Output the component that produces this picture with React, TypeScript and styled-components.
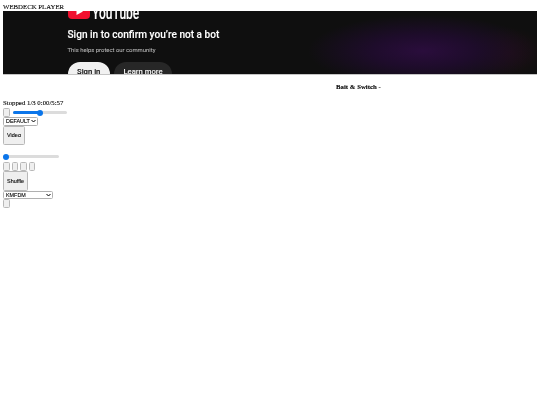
import React from "react";
import styled, { createGlobalStyle } from "styled-components";

const Global = createGlobalStyle`
  html, body { margin: 0; padding: 0; background: #fff; }
  body { font-family: "Liberation Serif", serif; font-size: 6.8px; color: #000; -webkit-text-stroke: 0.1px currentColor; }
`;

const Page = styled.div`
  padding: 3px 3px 0;
  display: flex;
  flex-direction: column;
  align-items: flex-start;
  filter: blur(0.3px);
`;
const Heading = styled.div`
  font-size: 6.8px;
  line-height: 8px;
  height: 8px;
  white-space: nowrap;
`;
const Frame = styled.div`
  width: 534px;
  height: 63.5px;
  box-sizing: border-box;
  overflow: hidden;
  background:
    radial-gradient(ellipse 115px 36px at 420px 40px, #2a0d3c 0%, #1e0c2b 45%, rgba(15,15,15,0) 100%),
    radial-gradient(ellipse 38px 26px at 505px 42px, #1e0f12 0%, rgba(15,15,15,0) 100%),
    #0f0f0f;
  border-bottom: 1px solid #c4c4c4;
  padding-left: 64.5px;
  display: flex;
  flex-direction: column;
  align-items: flex-start;
  font-family: Roboto, "Liberation Sans", sans-serif;
`;
const Logo = styled.div`
  display: flex;
  gap: 2px;
  height: 8.5px;
  flex: none;
  overflow: hidden;
`;
const LogoMark = styled.svg`
  width: 22px;
  height: 15px;
  margin-top: -7px;
  flex: none;
`;
const LogoWord = styled.span`
  color: #fff;
  font-size: 18px;
  line-height: 18px;
  font-weight: 500;
  margin-top: -7px;
  display: inline-block;
  flex: none;
  transform: scaleX(0.67);
  transform-origin: left;
`;
const Title = styled.div`
  margin-top: 7.5px;
  color: #fff;
  font-size: 10.1px;
  line-height: 15px;
  font-weight: 500;
  white-space: nowrap;
`;
const Sub = styled.div`
  margin-top: 4px;
  color: #aaa;
  font-size: 5.9px;
  line-height: 8px;
  white-space: nowrap;
`;
const Actions = styled.div`
  margin-top: 7.5px;
  display: flex;
  gap: 4px;
`;
const Pill = styled.div<{ $light?: boolean }>`
  height: 24px;
  padding: 0 9.5px;
  border-radius: 12px;
  background: ${(p) => (p.$light ? "#f1f1f1" : "#272727")};
  color: ${(p) => (p.$light ? "#0f0f0f" : "#f1f1f1")};
  font-size: 7.7px;
  font-weight: 500;
  line-height: 20px;
  white-space: nowrap;
`;
const TrackTitle = styled.div`
  align-self: stretch;
  margin-top: 8px;
  padding-left: 333px;
  font-weight: bold;
  font-size: 6.8px;
  line-height: 8px;
  height: 8px;
  white-space: nowrap;
`;
const Status = styled.div`
  margin-top: 8px;
  font-size: 6.8px;
  line-height: 8px;
  height: 8px;
  white-space: nowrap;
`;
const Row = styled.div`
  margin-top: 1.5px;
  display: flex;
  align-items: center;
  gap: 3.5px;
`;
const Square = styled.button`
  width: 6.5px;
  height: 9px;
  padding: 0;
  box-sizing: border-box;
  background: #efefef;
  border: 1px solid #b8b8b8;
  border-radius: 1.5px;
  display: block;
`;
const Slider = styled.div<{ $w: number }>`
  position: relative;
  width: ${(p) => p.$w}px;
  height: 3px;
  border-radius: 2px;
  background: #dcdcdc;
`;
const Fill = styled.div`
  height: 100%;
  border-radius: 2px;
  background: #0a75ea;
`;
const Thumb = styled.div`
  position: absolute;
  top: -1.5px;
  width: 6px;
  height: 6px;
  margin-left: -3px;
  border-radius: 50%;
  background: #0a75ea;
`;
const Select = styled.div<{ $w: number }>`
  width: ${(p) => p.$w}px;
  height: 8.5px;
  box-sizing: border-box;
  border: 1px solid #b0b0b0;
  border-radius: 1.5px;
  background: #fff;
  display: flex;
  align-items: center;
  justify-content: space-between;
  padding: 0 1px 0 2px;
  font-family: "Liberation Sans", sans-serif;
  font-size: 5.4px;
  line-height: 6px;
`;
const Chevron = styled.svg`
  width: 5px;
  height: 4px;
  flex: none;
`;
const TextButton = styled.button<{ $w: number }>`
  width: ${(p) => p.$w}px;
  height: 19.5px;
  padding: 0;
  box-sizing: border-box;
  background: #efefef;
  border: 1px solid #b8b8b8;
  border-radius: 1.5px;
  font-family: "Liberation Sans", sans-serif;
  font-size: 5.5px;
  color: #000;
  display: block;
`;
const VolumeRow = styled.div`
  margin-top: 8.5px;
  height: 6px;
  display: flex;
  align-items: center;
`;
const Buttons = styled.div`
  margin-top: 2px;
  display: flex;
  gap: 2px;
`;
const TallSquare = styled(Square)`
  height: 9.5px;
`;

const Arrow = () => (
  <Chevron viewBox="0 0 10 8">
    <path d="M1 2l4 4 4-4" fill="none" stroke="#000" strokeWidth="2" />
  </Chevron>
);

export default function App() {
  return (
    <Page>
      <Global />
      <Heading>WEBDECK PLAYER</Heading>
      <Frame>
        <Logo>
          <LogoMark viewBox="0 0 22 15">
            <rect width="22" height="15" rx="4" fill="#f0102f" />
            <path d="M8.5 4l6.5 3.5L8.5 11z" fill="#fff" />
          </LogoMark>
          <LogoWord>YouTube</LogoWord>
        </Logo>
        <Title>Sign in to confirm you’re not a bot</Title>
        <Sub>This helps protect our community</Sub>
        <Actions>
          <Pill $light>Sign in</Pill>
          <Pill>Learn more</Pill>
        </Actions>
      </Frame>
      <TrackTitle>Bait &amp; Switch -</TrackTitle>
      <Status>Stopped 1/3 0:00/5:57</Status>
      <Row>
        <Square />
        <Slider $w={54}>
          <Fill style={{ width: "50%" }} />
          <Thumb style={{ left: "50%" }} />
        </Slider>
      </Row>
      <Select $w={35}>
        DEFAULT
        <Arrow />
      </Select>
      <TextButton $w={22}>Video</TextButton>
      <VolumeRow>
        <Slider $w={56}>
          <Thumb style={{ left: "5%" }} />
        </Slider>
      </VolumeRow>
      <Buttons>
        <TallSquare />
        <TallSquare />
        <TallSquare />
        <TallSquare />
      </Buttons>
      <TextButton $w={25}>Shuffle</TextButton>
      <Select $w={50}>
        KMFDM
        <Arrow />
      </Select>
      <Square />
    </Page>
  );
}
